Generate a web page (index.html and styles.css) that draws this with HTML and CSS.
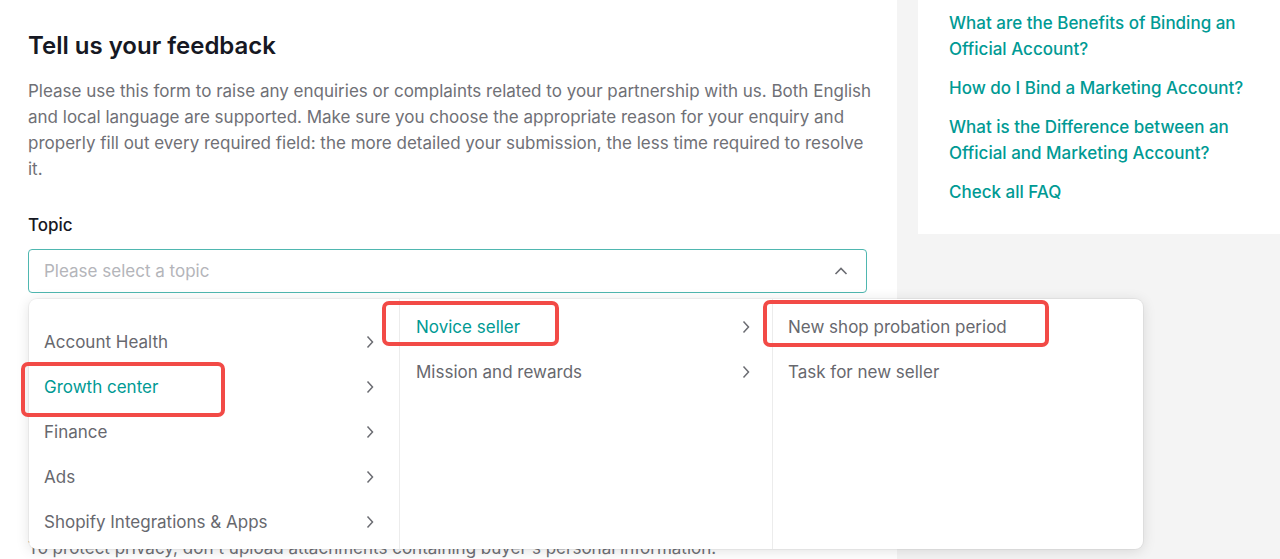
FILE: index.html
```html
<!DOCTYPE html>
<html lang="en">
<head>
<meta charset="utf-8">
<title>Tell us your feedback</title>
<link rel="stylesheet" href="styles.css">
</head>
<body>
<div class="page">
  <main class="main">
    <h1 class="title">Tell us your feedback</h1>
    <p class="intro">Please use this form to raise any enquiries or complaints related to your partnership with us. Both English and local language are supported. Make sure you choose the appropriate reason for your enquiry and properly fill out every required field: the more detailed your submission, the less time required to resolve it.</p>
    <div class="field">
      <div class="label">Topic</div>
      <div class="select-wrap">
        <div class="select">
          <span class="placeholder">Please select a topic</span>
          <svg class="caret" width="14" height="8" viewBox="0 0 14 8"><path d="M1.5 7 L7 1.5 L12.5 7" fill="none" stroke="#6b6c72" stroke-width="1.6"/></svg>
        </div>
        <div class="dropdown">
          <div class="col col-1">
            <ul class="list list-first">
              <li class="item"><span>Account Health</span><svg class="chev" width="8" height="14" viewBox="0 0 8 14"><path d="M1.5 1.5 L6.5 7 L1.5 12.5" fill="none" stroke="#6b6c72" stroke-width="1.5"/></svg></li>
              <li class="item active"><span>Growth center</span><svg class="chev" width="8" height="14" viewBox="0 0 8 14"><path d="M1.5 1.5 L6.5 7 L1.5 12.5" fill="none" stroke="#6b6c72" stroke-width="1.5"/></svg></li>
              <li class="item"><span>Finance</span><svg class="chev" width="8" height="14" viewBox="0 0 8 14"><path d="M1.5 1.5 L6.5 7 L1.5 12.5" fill="none" stroke="#6b6c72" stroke-width="1.5"/></svg></li>
              <li class="item"><span>Ads</span><svg class="chev" width="8" height="14" viewBox="0 0 8 14"><path d="M1.5 1.5 L6.5 7 L1.5 12.5" fill="none" stroke="#6b6c72" stroke-width="1.5"/></svg></li>
              <li class="item"><span>Shopify Integrations &amp; Apps</span><svg class="chev" width="8" height="14" viewBox="0 0 8 14"><path d="M1.5 1.5 L6.5 7 L1.5 12.5" fill="none" stroke="#6b6c72" stroke-width="1.5"/></svg></li>
            </ul>
          </div>
          <div class="col col-2">
            <ul class="list">
              <li class="item active"><span>Novice seller</span><svg class="chev" width="8" height="14" viewBox="0 0 8 14"><path d="M1.5 1.5 L6.5 7 L1.5 12.5" fill="none" stroke="#6b6c72" stroke-width="1.5"/></svg></li>
              <li class="item"><span>Mission and rewards</span><svg class="chev" width="8" height="14" viewBox="0 0 8 14"><path d="M1.5 1.5 L6.5 7 L1.5 12.5" fill="none" stroke="#6b6c72" stroke-width="1.5"/></svg></li>
            </ul>
          </div>
          <div class="col col-3">
            <ul class="list">
              <li class="item"><span>New shop probation period</span></li>
              <li class="item"><span>Task for new seller</span></li>
            </ul>
          </div>
          <div class="mark mark-growth"></div>
          <div class="mark mark-novice"></div>
          <div class="mark mark-probation"></div>
        </div>
      </div>
    </div>
    <p class="note">To protect privacy, don't upload attachments containing buyer's personal information.</p>
  </main>
  <aside class="side">
    <a class="faq" href="#">What are the Benefits of Binding an Official Account?</a>
    <a class="faq" href="#">How do I Bind a Marketing Account?</a>
    <a class="faq" href="#">What is the Difference between an Official and Marketing Account?</a>
    <a class="faq" href="#">Check all FAQ</a>
  </aside>
</div>
</body>
</html>
```

FILE: styles.css
```css
* { box-sizing: border-box; }

html, body {
  margin: 0;
  padding: 0;
}

body {
  background: #f4f4f4;
  font-family: Inter, "Noto Sans", Roboto, sans-serif;
  font-size: 17px;
  color: #161823;
  overflow: hidden;
}

.page {
  display: flex;
  gap: 21px;
  align-items: flex-start;
  height: 559px;
}

.main {
  width: 897px;
  height: 559px;
  background: #fff;
  padding: 31px 20px 0 28px;
  flex: none;
}

.title {
  margin: 0;
  font-size: 24px;
  line-height: 30px;
  font-weight: 600;
  color: #161823;
}

.intro {
  margin: 17px 0 0;
  font-size: 17px;
  line-height: 26px;
  color: #6f7076;
  width: 849px;
}

.field {
  margin-top: 31px;
}

.label {
  font-size: 17px;
  line-height: 24px;
  font-weight: 500;
  color: #161823;
}

.select-wrap {
  position: relative;
  margin-top: 12px;
  width: 839px;
}

.select {
  height: 44px;
  border: 1px solid #4fb7b0;
  border-radius: 4px;
  display: flex;
  align-items: center;
  justify-content: space-between;
  padding: 0 18px 0 15px;
}

.placeholder {
  color: #b4b5ba;
  font-size: 17px;
}

.dropdown {
  position: absolute;
  top: 50px;
  left: 1px;
  width: 1114px;
  height: 250px;
  background: #fff;
  border-radius: 8px;
  box-shadow: 0 2px 14px rgba(0, 0, 0, 0.12), 0 0 0 1px rgba(0, 0, 0, 0.04);
  display: flex;
  z-index: 5;
}

.col {
  overflow: hidden;
  height: 100%;
}

.col-1 { width: 370px; }
.col-2 { width: 373px; border-left: 1px solid #ececec; }
.col-3 { flex: 1; border-left: 1px solid #ececec; }

.list {
  list-style: none;
  margin: 0;
  padding: 5px 0 0;
}

.list-first {
  padding-top: 20px;
}

.item {
  height: 45px;
  display: flex;
  align-items: center;
  justify-content: space-between;
  color: #67686e;
  font-size: 17px;
}

.col-1 .item { padding: 0 25px 0 15px; }
.col-2 .item { padding: 0 22px 0 16px; }
.col-3 .item { padding: 0 16px 0 15px; }

.item.active { color: #009a94; }

.chev { flex: none; }

.mark {
  position: absolute;
  border: 4px solid #f24a46;
  border-radius: 7px;
}

.mark-growth { left: -8px; top: 63px; width: 204px; height: 55px; }
.mark-novice { left: 353px; top: 2px; width: 177px; height: 45px; }
.mark-probation { left: 734px; top: 1px; width: 286px; height: 47px; }

.note {
  margin: 245px 0 0;
  font-size: 17px;
  line-height: 20px;
  color: #6f7076;
}

.side {
  flex: 1;
  background: #fff;
  padding: 10px 20px 29px 31px;
  display: flex;
  flex-direction: column;
  gap: 13px;
}

.faq {
  color: #009a94;
  text-decoration: none;
  font-size: 17px;
  line-height: 26px;
  font-weight: 500;
}
```
